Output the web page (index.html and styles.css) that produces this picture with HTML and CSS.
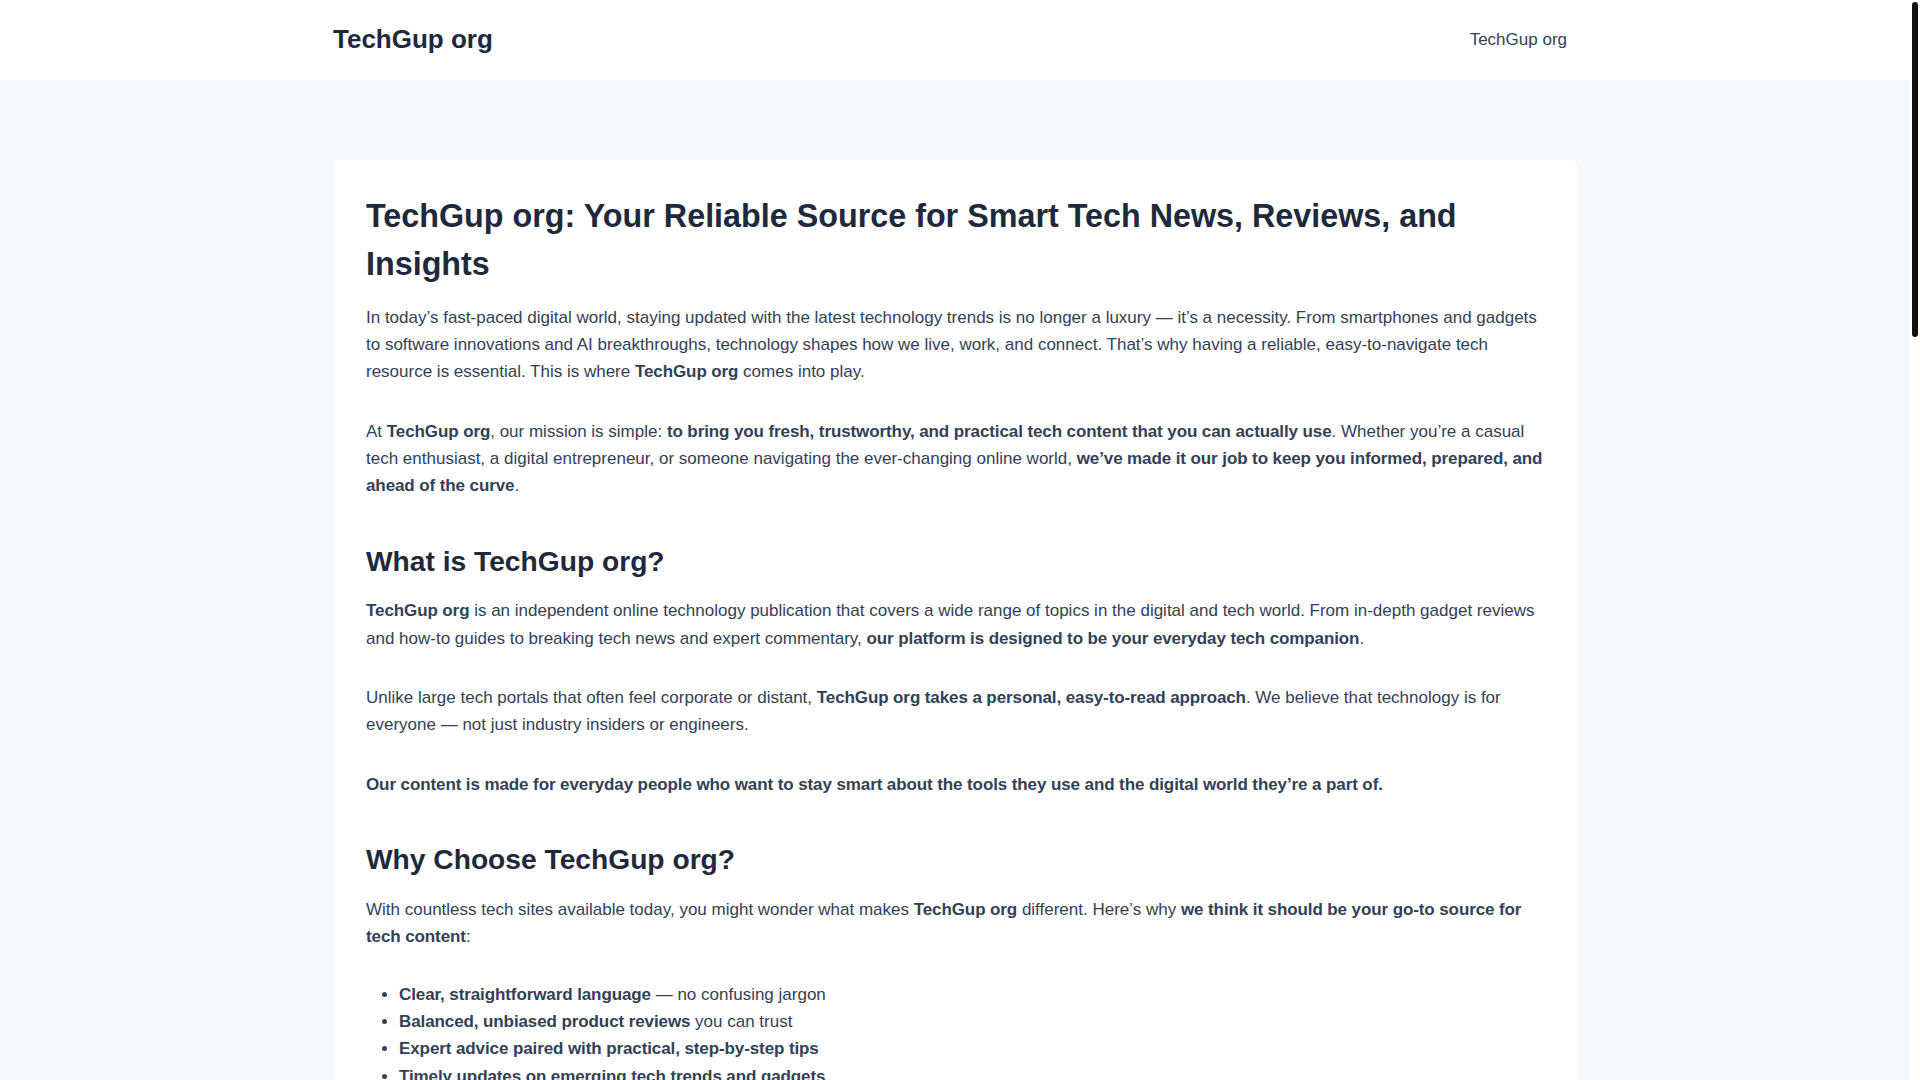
FILE: index.html
```html
<!DOCTYPE html>
<html lang="en">
<head>
    <meta charset="UTF-8">
    <meta name="viewport" content="width=device-width, initial-scale=1.0">
    <title>TechGup org</title>
    <link rel="stylesheet" href="styles.css">
</head>
<body>
<div class="page">
    <header class="site-header">
        <div class="header-inner">
            <a class="site-title" href="#">TechGup org</a>
            <nav class="main-nav">
                <a href="#">TechGup org</a>
            </nav>
        </div>
    </header>

    <main class="site-content">
        <article class="entry">
            <h1>TechGup org: Your Reliable Source for Smart Tech News, Reviews, and Insights</h1>

            <p>In today’s fast-paced digital world, staying updated with the latest technology trends is no longer a luxury — it’s a necessity. From smartphones and gadgets to software innovations and AI breakthroughs, technology shapes how we live, work, and connect. That’s why having a reliable, easy-to-navigate tech resource is essential. This is where <strong>TechGup org</strong> comes into play.</p>

            <p>At <strong>TechGup org</strong>, our mission is simple: <strong>to bring you fresh, trustworthy, and practical tech content that you can actually use</strong>. Whether you’re a casual tech enthusiast, a digital entrepreneur, or someone navigating the ever-changing online world, <strong>we’ve made it our job to keep you informed, prepared, and ahead of the curve</strong>.</p>

            <h2>What is TechGup org?</h2>

            <p><strong>TechGup org</strong> is an independent online technology publication that covers a wide range of topics in the digital and tech world. From in-depth gadget reviews and how-to guides to breaking tech news and expert commentary, <strong>our platform is designed to be your everyday tech companion</strong>.</p>

            <p>Unlike large tech portals that often feel corporate or distant, <strong>TechGup org takes a personal, easy-to-read approach</strong>. We believe that technology is for everyone — not just industry insiders or engineers.</p>

            <p><strong>Our content is made for everyday people who want to stay smart about the tools they use and the digital world they’re a part of.</strong></p>

            <h2>Why Choose TechGup org?</h2>

            <p>With countless tech sites available today, you might wonder what makes <strong>TechGup org</strong> different. Here’s why <strong>we think it should be your go-to source for tech content</strong>:</p>

            <ul>
                <li><strong>Clear, straightforward language</strong> — no confusing jargon</li>
                <li><strong>Balanced, unbiased product reviews</strong> you can trust</li>
                <li><strong>Expert advice paired with practical, step-by-step tips</strong></li>
                <li><strong>Timely updates on emerging tech trends and gadgets</strong></li>
                <li><strong>Content for all skill levels</strong>, from beginners to pros</li>
            </ul>

            <p>We don’t chase clicks with sensational headlines. Instead, <strong>we focus on quality, accuracy, and real value for our readers</strong>.</p>

            <h2>What You’ll Find on TechGup org</h2>

            <p>Our content is organized into several core categories, so you can quickly find exactly what you’re looking for.</p>

            <h3>1. Tech News</h3>

            <p>Stay in the loop with the <strong>latest announcements, product launches, and industry updates</strong>. We cover everything from major smartphone releases to policy changes that affect how you use the internet.</p>

            <h3>2. Gadget Reviews</h3>

            <p>Thinking about buying a new laptop, smartwatch, or pair of earbuds? <strong>Our honest, hands-on reviews break down the pros and cons</strong> so you can make an informed decision before you spend your money.</p>

            <h3>3. How-To Guides and Tutorials</h3>

            <p>From setting up a new router to securing your social media accounts, <strong>our step-by-step guides make technology easier to understand</strong>. Each tutorial is written with beginners in mind, without leaving experienced users behind.</p>

            <h3>4. Software and Apps</h3>

            <p>We explore the apps and tools that can boost your productivity, protect your privacy, and simplify your digital life. <strong>Discover hidden features, useful alternatives, and the best free tools available today.</strong></p>

            <h3>5. Artificial Intelligence and Emerging Tech</h3>

            <p>AI, machine learning, blockchain, and the metaverse are changing the world around us. <strong>We explain what these technologies mean for you</strong> — in plain, practical terms.</p>

            <h3>6. Online Safety and Privacy</h3>

            <p>Cyber threats are growing every year. <strong>Our security guides help you protect your devices, data, and identity</strong> with simple habits and reliable tools.</p>

            <h2>Who Is TechGup org For?</h2>

            <p>Our readers come from all walks of life. <strong>TechGup org</strong> is built for:</p>

            <ul>
                <li><strong>Students</strong> looking for reliable tools and learning resources</li>
                <li><strong>Professionals</strong> who want to work smarter with technology</li>
                <li><strong>Small business owners</strong> exploring digital solutions</li>
                <li><strong>Gamers and creators</strong> searching for the right gear</li>
                <li><strong>Curious minds</strong> who simply love learning about tech</li>
            </ul>

            <p>No matter your background, <strong>you’ll find content that speaks to your needs and interests</strong>.</p>

            <h2>Final Thoughts</h2>

            <p>In a world full of noise, <strong>TechGup org</strong> aims to be a clear, trustworthy voice. <strong>Whether you want to understand the latest gadget, solve a tech problem, or simply stay informed, we’re here to help you make sense of technology</strong> — one article at a time.</p>
        </article>
    </main>

    <footer class="site-footer">
        <div class="footer-inner">Copyright © 2025 TechGup org | Powered by TechGup org</div>
    </footer>
</div>

<div class="scrollbar">
    <div class="scrollbar-thumb"></div>
</div>
</body>
</html>
```

FILE: styles.css
```css
/* styles.css */
html,
body {
    height: 100%;
    margin: 0;
    overflow: hidden;
}

body {
    display: grid;
    grid-template-columns: 1fr 10px;
    background-color: #ffffff;
    color: #334155;
    font-family: "Liberation Sans", Arial, sans-serif;
    font-size: 17px;
    line-height: 1.6;
}

.page {
    height: 100vh;
    overflow: hidden;
    background-color: #f6f9fc;
}

/* scrollbar column on the right */
.scrollbar {
    height: 100vh;
    background-color: #ffffff;
    padding-top: 2px;
    box-sizing: border-box;
}

.scrollbar-thumb {
    width: 6px;
    height: 335px;
    margin: 0 auto;
    background-color: #111111;
    border-radius: 3px;
}

a {
    text-decoration: none;
}

.site-header {
    background-color: #ffffff;
}

.header-inner {
    max-width: 1244px;
    height: 80px;
    margin: 0 auto;
    display: flex;
    align-items: center;
    justify-content: space-between;
}

.site-title {
    color: #1e293b;
    font-size: 26px;
    font-weight: bold;
    line-height: 1.2;
}

.main-nav a {
    color: #334155;
    font-size: 17px;
    padding: 0 10px 0 16px;
}

.site-content {
    padding: 80px 0;
}

.entry {
    max-width: 1244px;
    margin: 0 auto;
    box-sizing: border-box;
    padding: 32px 33px;
    background-color: #ffffff;
    border-radius: 6px;
}

.entry h1,
.entry h2,
.entry h3 {
    color: #1e293b;
    font-weight: bold;
}

.entry h1 {
    font-size: 32.3px;
    line-height: 48px;
    margin: 0 0 16px;
}

.entry h2 {
    font-size: 28.2px;
    line-height: 1.4;
    margin: 42.5px 0 16px;
}

.entry h3 {
    font-size: 22px;
    line-height: 1.4;
    margin: 36px 0 14px;
}

.entry p {
    margin: 0 0 32.3px;
}

.entry strong {
    letter-spacing: -0.1px;
}

.entry ul {
    margin: -1.5px 0 32.3px;
    padding-left: 33px;
}

.entry > :last-child {
    margin-bottom: 0;
}

.site-footer {
    background-color: #ffffff;
}

.footer-inner {
    max-width: 1244px;
    margin: 0 auto;
    padding: 26px 0;
    text-align: center;
    font-size: 15px;
}
```
